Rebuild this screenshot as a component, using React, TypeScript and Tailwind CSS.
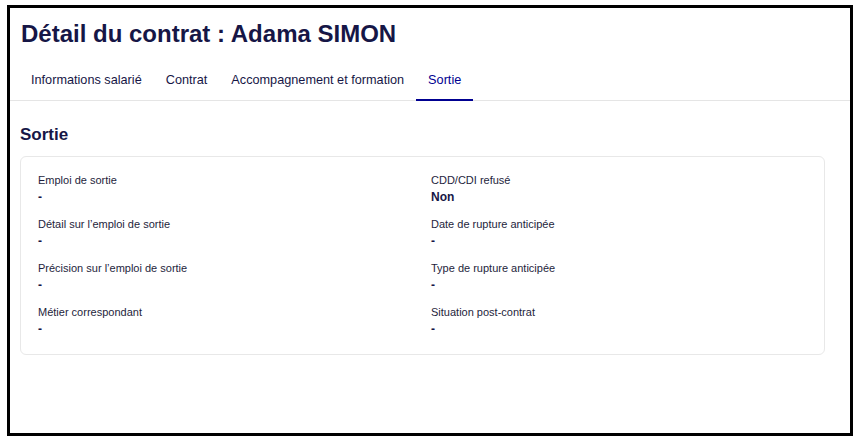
import React from "react";

const navy = "text-[#161646]";

function Field({ label, value }: { label: string; value: string }) {
  return (
    <div className="flex flex-col h-[44px]">
      <div className="text-[11px] leading-[16px] text-[#1e1e3c]">{label}</div>
      <div className="text-[12px] leading-[18px] font-bold text-[#161646]">{value}</div>
    </div>
  );
}

export default function App() {
  return (
    <div className="w-[860px] h-[445px] bg-white pl-[7px] pt-[5px]" style={{ fontFamily: "'Liberation Sans', Arial, sans-serif" }}>
      <div className="w-[846px] h-[431px] border-[3px] border-black bg-white flex flex-col">
        <h1 className={`pl-[11px] pt-[11px] text-[24px] leading-[30px] font-bold ${navy}`}>Détail du contrat : Adama SIMON</h1>
        <div className="mt-[23px] h-[29px] border-b border-[#e5e5e5] flex pl-[9px]">
          {["Informations salarié", "Contrat", "Accompagnement et formation", "Sortie"].map((t) => (
            <div
              key={t}
              className={`px-[12px] h-[29px] flex items-start text-[12.7px] leading-[16px] ${
                t === "Sortie" ? "text-[#000091] border-b-2 border-[#000091]" : "text-[#161646]"
              }`}
            >
              {t}
            </div>
          ))}
        </div>
        <h2 className={`pl-[10px] mt-[23px] text-[17px] leading-[22px] font-bold ${navy}`}>Sortie</h2>
        <div className="ml-[10px] mt-[10px] w-[805px] h-[199px] border border-[#e8e8e8] rounded-[6px] grid grid-cols-2 pl-[17px] pt-[15px]">
          <div className="flex flex-col">
            <Field label="Emploi de sortie" value="-" />
            <Field label="Détail sur l’emploi de sortie" value="-" />
            <Field label="Précision sur l’emploi de sortie" value="-" />
            <Field label="Métier correspondant" value="-" />
          </div>
          <div className="flex flex-col">
            <Field label="CDD/CDI refusé" value="Non" />
            <Field label="Date de rupture anticipée" value="-" />
            <Field label="Type de rupture anticipée" value="-" />
            <Field label="Situation post-contrat" value="-" />
          </div>
        </div>
      </div>
    </div>
  );
}
